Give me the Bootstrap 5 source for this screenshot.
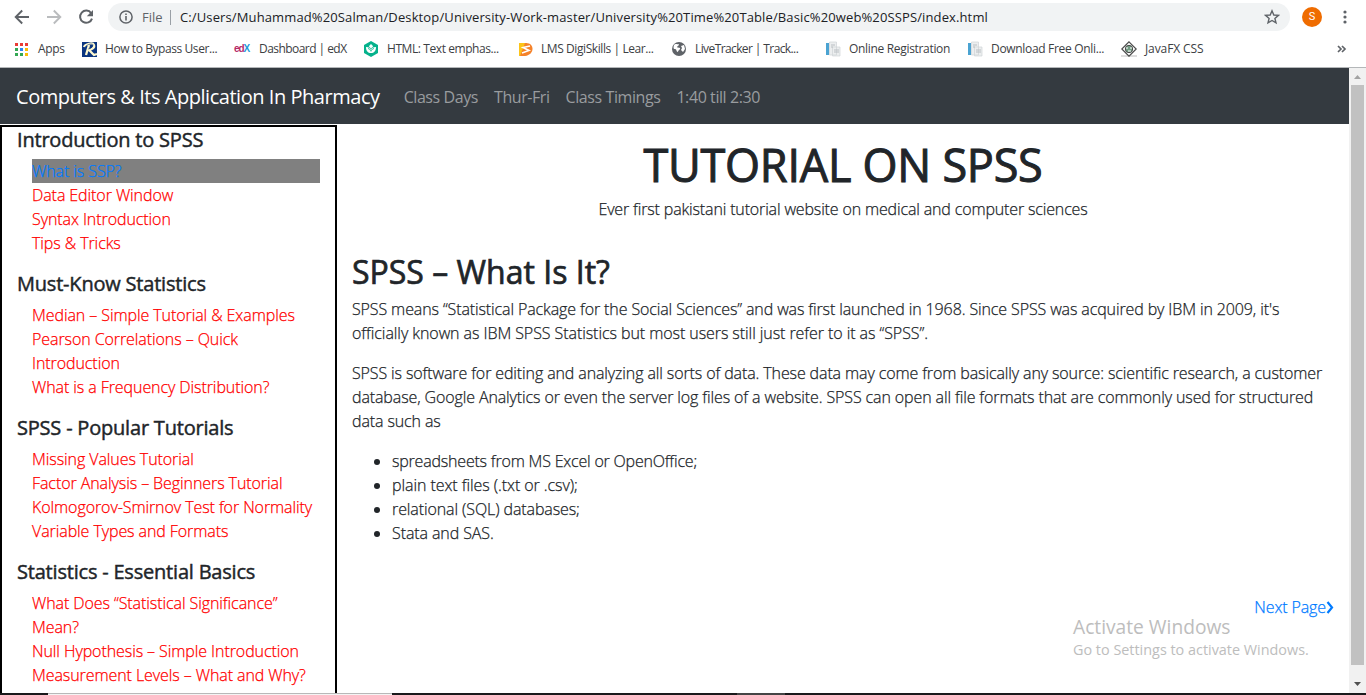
<!DOCTYPE html>
<html lang="en">
<head>
<meta charset="utf-8">
<meta name="viewport" content="width=device-width, initial-scale=1">
<title>Tutorial on SPSS</title>
<link href="https://cdn.jsdelivr.net/npm/bootstrap@5.3.0/dist/css/bootstrap.min.css" rel="stylesheet">
<style>
html,body{height:695px;overflow:hidden}
body{font-family:"Open Sans","Noto Sans",sans-serif;font-size:16px;line-height:24px;color:#212529;background:#fff}
svg{display:block;flex:none}
/* browser toolbar */
.toolbar-row{height:34px;padding-left:14px}
.omni{width:1182px;height:28px;border-radius:14px;background:#f1f3f4;font-size:13px;margin-left:14px;padding:0 10px 0 11px}
.omni .scheme{color:#5f6368;width:28px;margin-left:9px}
.omni .divider{width:1px;height:15px;background:#9aa0a6;margin-right:9px}
.omni .address{color:#202124;letter-spacing:.125px}
.avatar{width:20px;height:20px;border-radius:50%;background:#ef6c00;color:#fff;font:11px/20px Roboto,sans-serif;text-align:center;margin-left:12px}
/* bookmarks */
.marks-row{height:33px;display:grid;grid-template-columns:68px 152px 129px 155px 153px 154px 142px 154px 214px auto;padding-left:14px;font-size:12px;color:#3c4043}
.marks-row>div{display:flex;align-items:center;gap:8px;white-space:nowrap;height:30px;letter-spacing:-.42px}
.marks-row>div:nth-child(1){letter-spacing:-.3px}
.marks-row>div:nth-child(2){gap:7px}
.marks-row>div:nth-child(3){letter-spacing:-.55px;gap:9px}
.marks-row>div:nth-child(5){gap:7px}
.marks-row>div:nth-child(6){letter-spacing:-.6px}
.marks-row>div:nth-child(7),.marks-row>div:nth-child(8){letter-spacing:-.32px}
.marks-row>div:nth-child(9){letter-spacing:-.1px}
.edx{width:16px;font:bold 10px/12px "Liberation Sans",sans-serif;letter-spacing:-1.1px;color:#b52a67}
.edx b{color:#1d9bd8}
/* page */
.viewport-row{height:626px;border-top:1px solid #b4b7b9;overflow:hidden}
.page{width:1349px}
.site-nav{height:56px;background:#343a40;padding:1px 16px 0}
.site-nav .navbar-brand{font-size:20px;line-height:30px;letter-spacing:-.46px;color:#fff;margin-right:16px;padding:1px 0 0}
.site-nav .nav-link{color:#999c9f;padding:0 8px;letter-spacing:-.42px}
.side{width:337px;height:640px;border:2px solid #000;margin-top:1px;padding:0 15px;letter-spacing:-.08px}
.side h5{font-size:20px;line-height:24px;margin:0;padding-top:1px;height:32px;font-weight:400;white-space:nowrap;letter-spacing:-.2px}
.side ul{list-style:none;padding:0 0 0 15px;margin:0 0 16px}
.side li a{color:red;text-decoration:none}
.side .current{background:gray}
.side .current a{color:#007bff}
.side ul,.main-col{font-weight:300;-webkit-text-stroke:.25px}
.side h5,.main-col h1,.main-col h2{-webkit-text-stroke:.45px}
.main-col{width:1012px;padding:0 15px;letter-spacing:-.115px}
.main-col h1{font-size:45px;line-height:54px;font-weight:400;margin:14px 0 5px;letter-spacing:-.25px;-webkit-text-stroke:1px}
.main-col h2{font-size:32px;line-height:38px;font-weight:400;margin:32px 0 6px;letter-spacing:0;-webkit-text-stroke:.7px}
.main-col p{margin:0 0 16px;white-space:nowrap}
.main-col .tagline{letter-spacing:-.15px}
.main-col ul{padding-left:40px;margin:0 0 50px;letter-spacing:-.1px}
.main-col li:first-child{letter-spacing:-.2px}
.main-col .looser{letter-spacing:-.07px}
.main-col .next-link{color:#007bff;text-decoration:none}
.sb{width:17px;background:#f1f1f1}
.sb .thumb{width:13px;height:580px;background:#c1c1c1}
.strip{height:2px;background:#1a1a1c}
.strip .win{margin-left:48px;width:344px;background:#f4f4f4;border-top:1px solid #b8b8b8}
.strip .task{margin-left:345px;width:48px;background:#454546}
.wm{left:1073px;top:615px;color:#bdbdbd}
.wm .wm-title{font-size:19.2px;line-height:24px}
.wm .wm-text{font-size:14.4px;line-height:22px}
</style>
</head>
<body>
<div class="toolbar-row d-flex align-items-center">
<svg width="16" height="16" viewBox="0 0 16 16" fill="none" stroke="#5f6368" stroke-width="1.9"><path d="M15 8H2M8.2 1.5L1.7 8l6.5 6.5"/></svg>
<svg class="ms-3" width="16" height="16" viewBox="0 0 16 16" fill="none" stroke="#babcbe" stroke-width="1.9"><path d="M1 8h13M7.8 1.5L14.3 8l-6.5 6.5"/></svg>
<svg class="ms-3" width="16" height="16" viewBox="0 0 16 16"><path d="M13.2 4.2A6.1 6.1 0 1 0 14 9.6" fill="none" stroke="#5f6368" stroke-width="2"/><path d="M15 1v6.2H8.8z" fill="#5f6368"/></svg>
<div class="omni d-flex align-items-center">
<svg width="14" height="14" viewBox="0 0 14 14"><circle cx="7" cy="7" r="6.1" fill="none" stroke="#5f6368" stroke-width="1.5"/><path d="M6.2 6h1.6v4.4H6.2zM6.2 3.5h1.6V5H6.2z" fill="#5f6368"/></svg>
<span class="scheme">File</span><span class="divider"></span><span class="address">C:/Users/Muhammad%20Salman/Desktop/University-Work-master/University%20Time%20Table/Basic%20web%20SSPS/index.html</span>
<svg class="ms-auto" width="16" height="16" viewBox="0 0 16 16"><path d="M8 1.8l1.8 4.2 4.6.4-3.5 3 1.1 4.5L8 11.500l-4 2.400 1.100-4.500-3.500-3L6.200 6z" fill="none" stroke="#5f6368" stroke-width="1.4"/></svg>
</div>
<div class="avatar">S</div>
<svg style="margin-left:20px" width="6" height="16" viewBox="0 0 6 16" fill="#5f6368"><circle cx="3" cy="3" r="1.6"/><circle cx="3" cy="8" r="1.6"/><circle cx="3" cy="13" r="1.6"/></svg>
</div>
<div class="marks-row">
<div><svg width="16" height="16" viewBox="0 0 16 16"><path fill="#ea3b35" d="M1 2h3v3H1zM6 2h3v3H6zM11 2h3v3h-3z"/><path fill="#2a86f3" d="M6 7h3v3H6z"/><path fill="#fbbc05" d="M11 7h3v3h-3zM11 12h3v3h-3z"/><path fill="#34a853" d="M1 7h3v3H1zM1 12h3v3H1zM6 12h3v3H6z"/></svg><span>Apps</span></div>
<div><svg width="16" height="16" viewBox="0 0 16 16"><path fill="#0b3580" d="M0 1h15v15H0z"/><path d="M2 6c1-3 9-5 10-2s-3 5-6 5M7 4L4 14M7 9l5 5 3-1" fill="none" stroke="#fff9cf" stroke-width="2.300"/><path d="M3 6c2-3 8-4 8-2s-3 4-5 4" fill="none" stroke="#0b3580" stroke-width=".5"/></svg><span>How to Bypass User...</span></div>
<div><span class="edx">ed<b>X</b></span><span>Dashboard | edX</span></div>
<div><svg width="16" height="16" viewBox="0 0 16 16"><path fill="#05b28c" d="M8 0l7 4v8l-7 4-7-4V4z"/><path fill="#fff" d="M8 3l2.200 2.200L8 7.600 5.800 5.200zM3 6c3 0 4.500 1 5 3 .5-2 2-3 5-3 0 4-2 6-5 6S3 10 3 6z"/><path fill="none" stroke="#05b28c" stroke-width=".8" d="M5 7.500c1.500.3 2.600 1.300 3 2.800.4-1.500 1.500-2.500 3-2.800"/></svg><span>HTML: Text emphas...</span></div>
<div><svg width="16" height="16" viewBox="0 0 16 16"><path fill="#fcc419" d="M1 2h8l-2 13H1z"/><path fill="#f5822a" d="M7 2c10-1 10 12 0 13H2z"/><path d="M12 5L5 6.500 11 9.500 4 12" fill="none" stroke="#fff" stroke-width="1.600"/></svg><span>LMS DigiSkills | Lear...</span></div>
<div><svg width="16" height="16" viewBox="0 0 16 16"><circle cx="8" cy="8" r="7" fill="#5f6368"/><path fill="#fff" d="M3 4c2-2 3 0 5-1 0 2-2 2-2 3s4 0 3 2-2 1-2 3c-2 0-1-3-3-3S2.500 6 3 4zM10 5l3-1 1 4-2 3-2-2 1-2z"/></svg><span>LiveTracker | Track...</span></div>
<div><svg width="16" height="16" viewBox="0 0 16 16"><path fill="#eceeef" stroke="#d0d4d7" stroke-width=".7" d="M4.500 1h7v13h-7zM7.500 6H15v9H7.500z"/><path fill="#4aa3d2" d="M1 2h3v12H1z"/><path stroke="#b9bec2" d="M6 4h4M6 6h2M9 9h5M9 11h5"/></svg><span>Online Registration</span></div>
<div><svg width="16" height="16" viewBox="0 0 16 16"><path fill="#eceeef" stroke="#d0d4d7" stroke-width=".7" d="M4.500 1h7v13h-7zM7.500 6H15v9H7.500z"/><path fill="#4aa3d2" d="M1 2h3v12H1z"/><path stroke="#b9bec2" d="M6 4h4M6 6h2M9 9h5M9 11h5"/></svg><span>Download Free Onli...</span></div>
<div><svg width="16" height="16" viewBox="0 0 16 16"><path fill="#ddd" d="M0 14h16v2H0z"/><path fill="#fff" stroke="#4a4a4a" stroke-width="1.200" d="M8 .8L15.200 8 8 15.200.8 8z"/><circle cx="8" cy="8" r="3.700" fill="#739b83" stroke="#4a4a4a"/><path d="M5 7h2M9 7h2M7 10h3" stroke="#fff"/></svg><span>JavaFX CSS</span></div>
<div><svg width="12" height="10" viewBox="0 0 12 10" fill="none" stroke="#5f6368" stroke-width="1.700"><path d="M3 2l3 3-3 3M7 2l3 3-3 3"/></svg></div>
</div>
<div class="viewport-row d-flex">
<div class="page">
<nav class="site-nav d-flex align-items-center"><a class="navbar-brand" href="#">Computers &amp; Its Application In Pharmacy</a><a class="nav-link" href="#">Class Days</a><a class="nav-link" href="#">Thur-Fri</a><a class="nav-link" href="#">Class Timings</a><a class="nav-link" href="#">1:40 till 2:30</a></nav>
<div class="d-flex">
<aside class="side">
<h5>Introduction to SPSS</h5>
<ul><li class="current"><a href="#">What is SSP?</a></li><li><a href="#">Data Editor Window</a></li><li><a href="#">Syntax Introduction</a></li><li><a href="#">Tips &amp; Tricks</a></li></ul>
<h5>Must-Know Statistics</h5>
<ul><li><a href="#">Median – Simple Tutorial &amp; Examples</a></li><li><a href="#">Pearson Correlations – Quick<br>Introduction</a></li><li><a href="#">What is a Frequency Distribution?</a></li></ul>
<h5>SPSS - Popular Tutorials</h5>
<ul><li><a href="#">Missing Values Tutorial</a></li><li><a href="#">Factor Analysis – Beginners Tutorial</a></li><li><a href="#">Kolmogorov-Smirnov Test for Normality</a></li><li><a href="#">Variable Types and Formats</a></li></ul>
<h5>Statistics - Essential Basics</h5>
<ul><li><a href="#">What Does “Statistical Significance”<br>Mean?</a></li><li><a href="#">Null Hypothesis – Simple Introduction</a></li><li><a href="#">Measurement Levels – What and Why?</a></li></ul>
</aside>
<main class="main-col">
<h1 class="text-center">TUTORIAL ON SPSS</h1>
<p class="tagline text-center">Ever first pakistani tutorial website on medical and computer sciences</p>
<h2>SPSS – What Is It?</h2>
<p>SPSS means “Statistical Package for the Social Sciences” and was first launched in 1968. Since SPSS was acquired by IBM in 2009, it's<br><span class="looser">officially known as IBM SPSS Statistics but most users still just refer to it as “SPSS”.</span></p>
<p>SPSS is software for editing and analyzing all sorts of data. These data may come from basically any source: scientific research, a customer<br>database, Google Analytics or even the server log files of a website. SPSS can open all file formats that are commonly used for structured<br>data such as</p>
<ul><li>spreadsheets from MS Excel or OpenOffice;</li><li class="looser">plain text files (.txt or .csv);</li><li>relational (SQL) databases;</li><li>Stata and SAS.</li></ul>
<a class="next-link d-flex justify-content-end align-items-center" href="#">Next Page<svg width="8" height="13" viewBox="0 0 8 13" fill="none" stroke="#007bff" stroke-width="2.200"><path d="M1.500 1l4.500 5.500L1.500 12"/></svg></a>
</main>
</div>
</div>
<div class="sb d-flex flex-column align-items-center">
<svg width="17" height="17" viewBox="0 0 17 17"><path fill="#a3a3a3" d="M5 11h7L8.500 7z"/></svg>
<div class="thumb"></div>
<svg class="mt-auto" width="17" height="17" viewBox="0 0 17 17"><path fill="#505050" d="M5 6h7l-3.500 4z"/></svg>
</div>
</div>
<div class="strip d-flex"><div class="win"></div><div class="task"></div></div>
<div class="wm position-absolute"><div class="wm-title">Activate Windows</div><div class="wm-text">Go to Settings to activate Windows.</div></div>
<script src="https://cdn.jsdelivr.net/npm/bootstrap@5.3.0/dist/js/bootstrap.bundle.min.js"></script>
</body>
</html>
